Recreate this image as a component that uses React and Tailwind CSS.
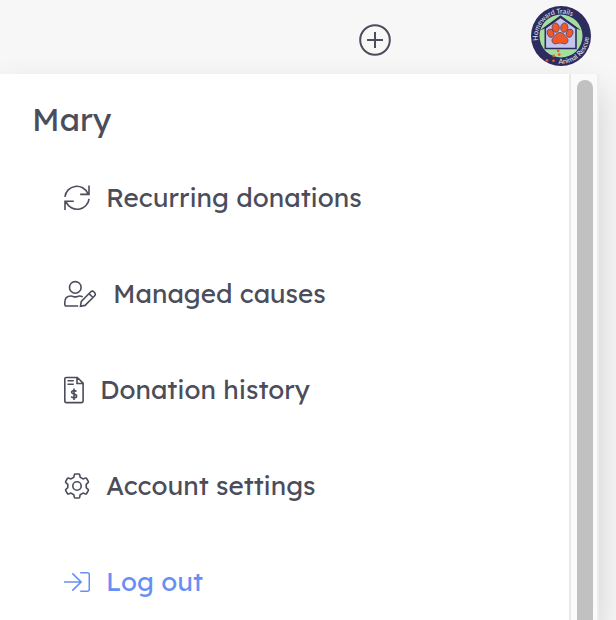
import React from "react";

const iconProps = {
  fill: "none",
  stroke: "currentColor",
  strokeWidth: 1.6,
  "aria-hidden": true,
};

function RecurringIcon() {
  return (
    <svg {...iconProps} width="26" height="28" viewBox="0 0 26 28">
      <path d="M.9 12.8A12 12 0 0 1 23.8 9.5M25 1.5v8.9h-8.8" />
      <path d="M25.1 14.8A12 12 0 0 1 2.2 18.1M1 26.1v-8.9h8.8" />
    </svg>
  );
}

function ManagedIcon() {
  return (
    <svg {...iconProps} width="33" height="28" viewBox="0 0 33 28">
      <circle cx="11.3" cy="7.4" r="5.8" />
      <path d="M14.2 26H2.2A1.4 1.4 0 0 1 .8 24.6v-2.3c0-3.8 2.4-6.3 6.2-6.3 1.4 0 2.6.9 4.3.9s2.7-.9 4.1-.9c1.3 0 2.3.3 3.3.9" />
      <path d="M16.5 26.2l.8-4.8 9.5-9.6a2.1 2.1 0 0 1 3 0l.9.9a2.1 2.1 0 0 1 0 3l-9.6 9.7zM25 13.6l3.9 3.9" />
    </svg>
  );
}

function HistoryIcon() {
  return (
    <svg {...iconProps} width="20" height="28" viewBox="0 0 20 28">
      <path d="M2.5 1.5h10.8l5.8 5.7v17.9a1.5 1.5 0 0 1-1.5 1.5H2.3a1.5 1.5 0 0 1-1.5-1.5V3a1.5 1.5 0 0 1 1.5-1.5zM13 1.6v5.9h6M3.5 4.8h6.3M3.5 8.2h6.3" />
      <path d="M12.5 15.6c-.6-.7-1.4-1-2.5-1-1.5 0-2.4.7-2.4 1.7 0 2.5 5 1.1 5 3.7 0 1.1-1 1.8-2.6 1.8-1.2 0-2.2-.4-2.8-1.2M10 12.5v11.4" />
    </svg>
  );
}

function SettingsIcon() {
  return (
    <svg {...iconProps} width="26" height="28" viewBox="0 0 26 28" strokeLinejoin="round">
      <circle cx="13" cy="14" r="4.2" />
      <path d="M11.3 2h3.4q.8 0 1 .8l.5 2.5 2.8 1.6 2.4-.8q.8-.3 1.2.4l1.7 2.9q.4.7-.2 1.3l-1.9 1.7v3.2l1.9 1.7q.6.6.2 1.3l-1.7 2.9q-.4.7-1.2.4l-2.4-.8-2.8 1.6-.5 2.5q-.2.8-1 .8h-3.4q-.8 0-1-.8l-.5-2.5L7 21.1l-2.4.8q-.8.3-1.2-.4l-1.7-2.9q-.4-.7.2-1.3l1.9-1.7v-3.2l-1.9-1.7q-.6-.6-.2-1.3l1.7-2.9q.4-.7 1.2-.4L7 6.9l2.8-1.6.5-2.5q.2-.8 1-.8z" />
    </svg>
  );
}

function LogoutIcon() {
  return (
    <svg {...iconProps} width="26" height="28" viewBox="0 0 26 28">
      <path d="M0 14h17M8.3 5.4l8.8 8.6-8.8 8.6M16.2 4.8h7.3a1.8 1.8 0 0 1 1.8 1.8v14.8a1.8 1.8 0 0 1-1.8 1.8h-7.3" />
    </svg>
  );
}

function RescueLogo() {
  return (
    <svg width="60" height="60" viewBox="0 0 60 60" aria-hidden="true">
      <defs>
        <path id="topArc" d="M7.2 34.5A23.2 23.2 0 1 1 53 34.5" />
        <path id="bottomArc" d="M27.5 57.6A27.7 27.7 0 0 0 57.6 27 27.7 27.7 0 0 0 50 11" />
      </defs>
      <circle cx="30" cy="30" r="30" fill="#2d2c5e" />
      <circle cx="30" cy="30" r="21.5" fill="#a5dfa0" />
      <path d="M14.3 22L29.5 11 45 22v20.5H14.3z" fill="#c3c5ee" stroke="#2d2c5e" strokeWidth="1.6" />
      <path d="M9 24.2L29.5 9.3 50 24.2l-5-1.6-15.5-11-15.2 11z" fill="#2d2c5e" />
      <g fill="#ee592b" stroke="#54375c" strokeWidth=".7">
        <ellipse cx="24.7" cy="21.6" rx="3.6" ry="4.7" transform="rotate(-8 24.7 21.6)" />
        <ellipse cx="33.3" cy="21.6" rx="3.6" ry="4.7" transform="rotate(8 33.3 21.6)" />
        <ellipse cx="19.6" cy="27.2" rx="3.2" ry="4.2" transform="rotate(-20 19.6 27.2)" />
        <ellipse cx="38.6" cy="27.2" rx="3.2" ry="4.2" transform="rotate(20 38.6 27.2)" />
        <path d="M29 26.4c4 0 4.5 3.3 6.6 5 2.8 2.5 1.2 6.7-2.1 6.5-1.9-.1-2.6-.8-4.5-.8s-2.6.7-4.5.8c-3.3.2-4.9-4-2.1-6.5 2.1-1.7 2.6-5 6.6-5z" />
      </g>
      <g fill="#ee592b">
        <circle cx="27.2" cy="44.8" r="1.4" />
        <circle cx="28.2" cy="48.6" r="1.4" />
        <circle cx="22.7" cy="49.8" r="1.4" />
        <circle cx="16" cy="54.3" r="1.3" />
        <circle cx="22.5" cy="54.7" r="1.3" />
      </g>
      <g fill="#f0f0f8" fontSize="7" className="font-[Lato,sans-serif]">
        <text>
          <textPath href="#topArc">Homeward Trails</textPath>
        </text>
        <text>
          <textPath href="#bottomArc">Animal Rescue</textPath>
        </text>
      </g>
    </svg>
  );
}

const menuItems = [
  { label: "Recurring donations", icon: RecurringIcon },
  { label: "Managed causes", icon: ManagedIcon },
  { label: "Donation history", icon: HistoryIcon },
  { label: "Account settings", icon: SettingsIcon },
  { label: "Log out", icon: LogoutIcon, accent: true },
];

function App() {
  return (
    <div className="flex h-screen flex-col overflow-hidden bg-[#f7f7f7] font-[Lexend,Inter,sans-serif] text-[#4b4d5b]">
      <header className="flex h-[74px] shrink-0 items-start justify-end gap-[140px] pr-[25px] pt-[6px]">
        <button type="button" aria-label="Create" className="mt-[18px]">
          <svg {...iconProps} width="32" height="32" viewBox="0 0 32 32" strokeWidth="2">
            <circle cx="16" cy="16" r="14.8" />
            <path d="M16 8v16M8 16h16" />
          </svg>
        </button>
        <button type="button" aria-label="Homeward Trails Animal Rescue">
          <RescueLogo />
        </button>
      </header>

      <div className="mr-[17px] flex min-h-0 grow bg-white shadow-[0_16px_32px_rgba(0,0,0,0.16)]">
        <nav className="min-w-0 grow overflow-hidden pt-6">
          <h2 className="pl-8 text-[32px] leading-[42px]">Mary</h2>
          <ul className="pt-[10px]">
            {menuItems.map(({ label, icon: Icon, accent }) => (
              <li key={label}>
                <a
                  href="#"
                  className={`flex h-24 items-center gap-4 pl-16 text-[26px] leading-8 ${
                    accent ? "text-[#678ff5]" : ""
                  }`}
                >
                  <Icon />
                  <span className="whitespace-nowrap">{label}</span>
                </a>
              </li>
            ))}
          </ul>
        </nav>

        {/* Scroll track */}
        <div className="flex w-[30px] shrink-0 border-l-2 border-r-2 border-l-[#e8e8e8] border-r-[#ededed] bg-[#fafafa] pl-[6px] pt-[6px]">
          <div className="w-4 rounded-t-full bg-[#c1c1c1]" />
        </div>
      </div>
    </div>
  );
}

export default App;
